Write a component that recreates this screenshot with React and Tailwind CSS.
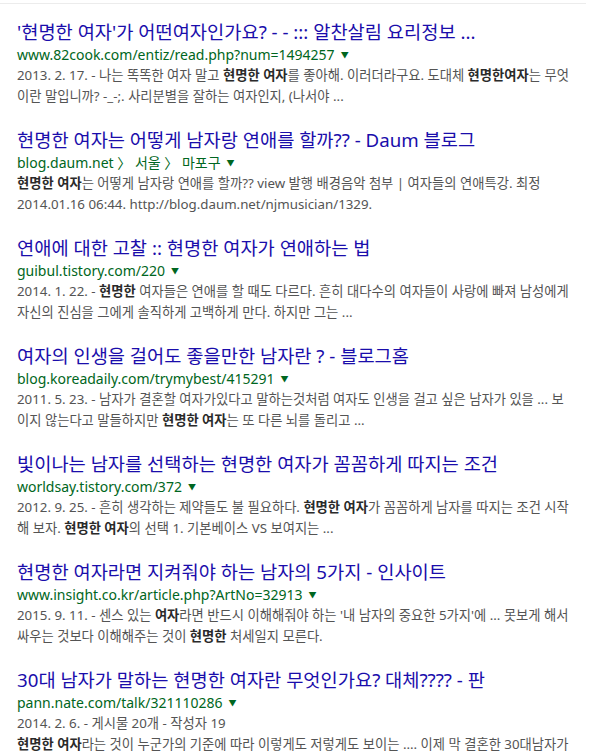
import React from "react";

const results = [
  {
    title: "'현명한 여자'가 어떤여자인가요? - - ::: 알찬살림 요리정보 ...",
    url: "www.82cook.com/entiz/read.php?num=1494257",
    lines: [
      ["2013. 2. 17. - 나는 똑똑한 여자 말고 ", { b: "현명한 여자" }, "를 좋아해. 이러더라구요. 도대체 ", { b: "현명한여자" }, "는 무엇"],
      ["이란 말입니까? -_-;. 사리분별을 잘하는 여자인지, (나서야 ..."],
    ],
  },
  {
    title: "현명한 여자는 어떻게 남자랑 연애를 할까?? - Daum 블로그",
    url: "blog.daum.net \u3009 서울 \u3009 마포구",
    lines: [
      [{ b: "현명한 여자" }, "는 어떻게 남자랑 연애를 할까?? view 발행 배경음악 첨부 | 여자들의 연애특강. 최정"],
      ["2014.01.16 06:44. http://blog.daum.net/njmusician/1329."],
    ],
  },
  {
    title: "연애에 대한 고찰 :: 현명한 여자가 연애하는 법",
    url: "guibul.tistory.com/220",
    lines: [
      ["2014. 1. 22. - ", { b: "현명한" }, " 여자들은 연애를 할 때도 다르다. 흔히 대다수의 여자들이 사랑에 빠져 남성에게"],
      ["자신의 진심을 그에게 솔직하게 고백하게 만다. 하지만 그는 ..."],
    ],
  },
  {
    title: "여자의 인생을 걸어도 좋을만한 남자란 ? - 블로그홈",
    url: "blog.koreadaily.com/trymybest/415291",
    lines: [
      ["2011. 5. 23. - 남자가 결혼할 여자가있다고 말하는것처럼 여자도 인생을 걸고 싶은 남자가 있을 ... 보"],
      ["이지 않는다고 말들하지만 ", { b: "현명한 여자" }, "는 또 다른 뇌를 돌리고 ..."],
    ],
  },
  {
    title: "빛이나는 남자를 선택하는 현명한 여자가 꼼꼼하게 따지는 조건",
    url: "worldsay.tistory.com/372",
    lines: [
      ["2012. 9. 25. - 흔히 생각하는 제약들도 불 필요하다. ", { b: "현명한 여자" }, "가 꼼꼼하게 남자를 따지는 조건 시작"],
      ["해 보자. ", { b: "현명한 여자" }, "의 선택 1. 기본베이스 VS 보여지는 ..."],
    ],
  },
  {
    title: "현명한 여자라면 지켜줘야 하는 남자의 5가지 - 인사이트",
    url: "www.insight.co.kr/article.php?ArtNo=32913",
    lines: [
      ["2015. 9. 11. - 센스 있는 ", { b: "여자" }, "라면 반드시 이해해줘야 하는 '내 남자의 중요한 5가지'에 ... 못보게 해서"],
      ["싸우는 것보다 이해해주는 것이 ", { b: "현명한" }, " 처세일지 모른다."],
    ],
  },
  {
    title: "30대 남자가 말하는 현명한 여자란 무엇인가요? 대체???? - 판",
    url: "pann.nate.com/talk/321110286",
    lines: [
      ["2014. 2. 6. - 게시물 20개 - 작성자 19"],
      [{ b: "현명한 여자" }, "라는 것이 누군가의 기준에 따라 이렇게도 저렇게도 보이는 .... 이제 막 결혼한 30대남자가"],
      [{ b: "현명한 여자" }, "란 어떤 사람인지 생각해 보았습니다. 제 생각에는 ..."],
    ],
  },
];

function Line({ parts }) {
  return (
    <div className="whitespace-nowrap">
      {parts.map((p, i) =>
        typeof p === "string" ? (
          <span key={i}>{p}</span>
        ) : (
          <b key={i} className="font-bold text-[#2a2a2a]">
            {p.b}
          </b>
        )
      )}
    </div>
  );
}

export default function App() {
  return (
    <div
      className="w-[600px] h-[753px] overflow-hidden bg-white"
      style={{ fontFamily: '"Noto Sans", "Noto Sans CJK KR", sans-serif' }}
    >
      <div className="h-[4px] w-[586px] border-b border-[#ececec]" />
      <div className="flex flex-col gap-[21px] pl-[17px] pt-[16px]">
        {results.map((r, i) => (
          <div key={i} className="flex flex-col">
            <div className="whitespace-nowrap text-[18.7px] leading-[24px] text-[#1a0dab]">
              {r.title}
            </div>
            <div className="flex items-center whitespace-nowrap text-[14px] leading-[21px] text-[#006621]">
              <span>{r.url}</span>
              <span className="ml-[6px] text-[8px]">▼</span>
            </div>
            <div className="text-[13.3px] leading-[21px] text-[#545454]">
              {r.lines.map((l, j) => (
                <Line key={j} parts={l} />
              ))}
            </div>
          </div>
        ))}
      </div>
    </div>
  );
}
